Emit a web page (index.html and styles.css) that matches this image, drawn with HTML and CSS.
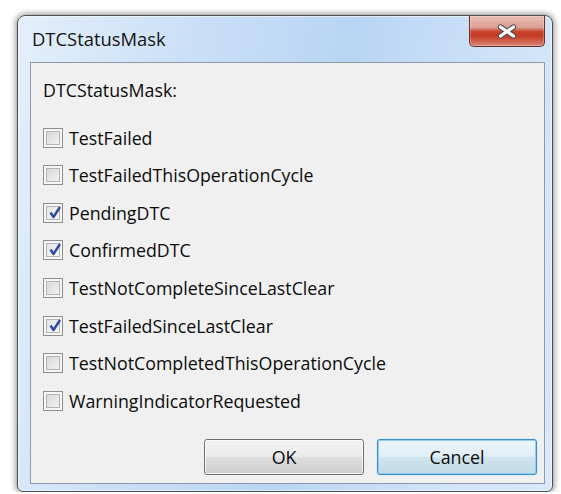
FILE: index.html
```html
<!DOCTYPE html>
<html lang="en">
<head>
<meta charset="utf-8">
<title>DTCStatusMask</title>
<link rel="stylesheet" href="styles.css">
</head>
<body>
<div class="window">
  <div class="titlebar">
    <span class="title">DTCStatusMask</span>
    <button class="close" aria-label="Close">
      <svg width="20" height="15" viewBox="0 0 20 15">
        <path d="M3.5 3 L16.5 12 M16.5 3 L3.5 12" stroke="#505050" stroke-width="5.4" stroke-linecap="round"/>
        <path d="M3.5 3 L16.5 12 M16.5 3 L3.5 12" stroke="#ffffff" stroke-width="3.2" stroke-linecap="round"/>
      </svg>
    </button>
  </div>
  <div class="client">
    <div class="label">DTCStatusMask:</div>
    <ul class="flags">
      <li class="flag"><span class="box"></span>TestFailed</li>
      <li class="flag"><span class="box"></span>TestFailedThisOperationCycle</li>
      <li class="flag"><span class="box checked"><svg width="20" height="20" viewBox="0 0 20 20"><path d="M7.5 9.5 L10.5 14 L17 4" fill="none" stroke="#2f4aa2" stroke-width="2.4" stroke-linejoin="round"/></svg></span>PendingDTC</li>
      <li class="flag"><span class="box checked"><svg width="20" height="20" viewBox="0 0 20 20"><path d="M7.5 9.5 L10.5 14 L17 4" fill="none" stroke="#2f4aa2" stroke-width="2.4" stroke-linejoin="round"/></svg></span>ConfirmedDTC</li>
      <li class="flag"><span class="box"></span>TestNotCompleteSinceLastClear</li>
      <li class="flag"><span class="box checked"><svg width="20" height="20" viewBox="0 0 20 20"><path d="M7.5 9.5 L10.5 14 L17 4" fill="none" stroke="#2f4aa2" stroke-width="2.4" stroke-linejoin="round"/></svg></span>TestFailedSinceLastClear</li>
      <li class="flag"><span class="box"></span>TestNotCompletedThisOperationCycle</li>
      <li class="flag"><span class="box"></span>WarningIndicatorRequested</li>
    </ul>
    <div class="actions">
      <button class="btn">OK</button>
      <button class="btn btn-focus">Cancel</button>
    </div>
  </div>
</div>
</body>
</html>
```

FILE: styles.css
```css
html, body {
  margin: 0;
  padding: 0;
  background: #ffffff;
}

body {
  font-family: "Open Sans", "Noto Sans", sans-serif;
  font-size: 17.8px;
  color: #0c0c0c;
  padding: 15px 0 0 17px;
}

/* Aero-style dialog frame */
.window {
  box-sizing: border-box;
  width: 536px;
  height: 477px;
  display: flex;
  flex-direction: column;
  border: 1px solid #4a4d52;
  border-radius: 8px 8px 6px 6px;
  background: linear-gradient(100deg, #e3effb 0%, #c9dff6 30%, #b9d5f3 55%, #cfe3f8 80%, #d9e9fa 100%);
  box-shadow: 0 0 6px 1px rgba(0, 0, 0, 0.45), inset 0 0 0 1px rgba(255, 255, 255, 0.55);
}

.titlebar {
  height: 46px;
  flex: none;
  display: flex;
  justify-content: space-between;
  align-items: flex-start;
  padding: 0 7px 0 14px;
}

.title {
  margin-top: 11px;
  line-height: 24px;
  font-size: 18.4px;
  color: #141414;
}

.close {
  box-sizing: border-box;
  width: 76px;
  height: 31px;
  padding: 0;
  margin: 0;
  display: flex;
  align-items: center;
  justify-content: center;
  border: 1px solid #6a3028;
  border-top: none;
  border-radius: 0 0 5px 5px;
  background: linear-gradient(180deg, #e9bcb4 0%, #dc9f94 38%, #c9432d 52%, #c43a22 66%, #d16a58 88%, #d88a7b 100%);
  box-shadow: inset 0 0 0 1px rgba(255, 255, 255, 0.25);
}

.client {
  flex: 1;
  margin: 0 7px 7px 12px;
  display: flex;
  flex-direction: column;
  border: 1px solid #8e9aa8;
  background: #f0f0f0;
  padding: 15px 7px 8px 12px;
}

.label {
  line-height: 24px;
}

.flags {
  list-style: none;
  margin: 16.7px 0 0 0;
  padding: 0;
}

.flag {
  height: 37.64px;
  display: flex;
  align-items: center;
}

/* Classic themed checkbox */
.box {
  box-sizing: border-box;
  width: 20px;
  height: 20px;
  margin-right: 6px;
  flex: none;
  position: relative;
  border: 1px solid #8f8f8f;
  background: #f4f4f4;
  box-shadow: inset 0 0 0 2px #f6f6f6, inset 0 0 0 3px #b4b4b4;
  background-image: linear-gradient(135deg, #cfd1d4 0%, #e6e7e8 55%, #f8f8f8 100%);
}

.box.checked {
  background-image: linear-gradient(135deg, #dcdee2 0%, #eeeff1 55%, #fbfbfb 100%);
}

.box svg {
  position: absolute;
  left: -1px;
  top: -1px;
}

.actions {
  margin-top: auto;
  display: flex;
  justify-content: flex-end;
  gap: 13px;
}

.btn {
  box-sizing: border-box;
  width: 160px;
  height: 36px;
  font-family: inherit;
  font-size: 17.8px;
  color: #0c0c0c;
  border: 1px solid #707070;
  border-radius: 3px;
  background: linear-gradient(180deg, #f3f3f3 0%, #ebebeb 48%, #dddddd 52%, #cfcfcf 100%);
  box-shadow: inset 0 0 0 1px rgba(255, 255, 255, 0.75);
  padding: 0;
}

.btn-focus {
  border-color: #3c8fc8;
  background: linear-gradient(180deg, #eef6fb 0%, #e0eef7 48%, #cfe3ee 52%, #c2dae7 100%);
  box-shadow: inset 0 0 0 1px #8fd0f2, 0 0 1px #56b4ea;
}
```
